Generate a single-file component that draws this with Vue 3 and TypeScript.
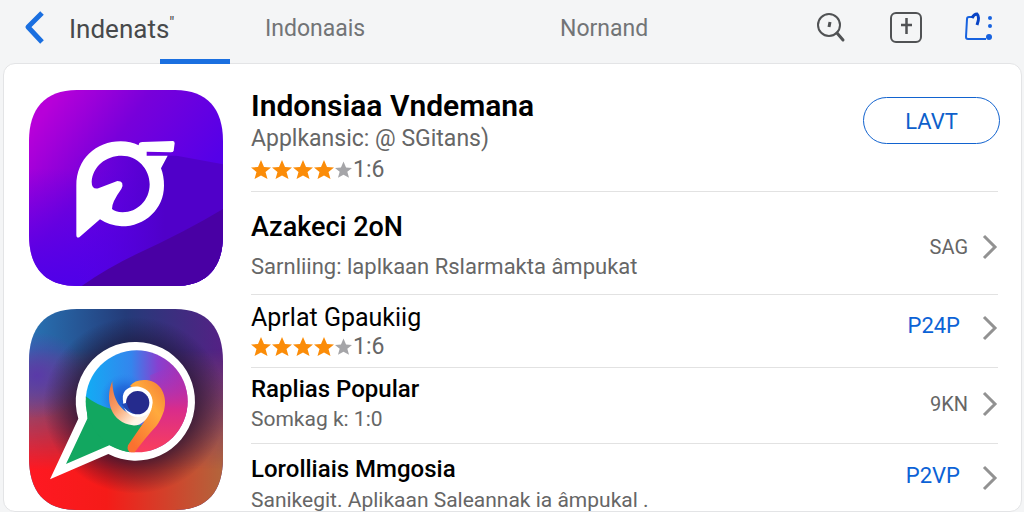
<script setup lang="ts">
interface Entry {
  title: string
  detail?: string
  rating?: string
  action: string
  muted?: boolean
  size: string
}

const tabs: string[] = ['Indonaais', 'Nornand']

const entries: Entry[] = [
  { title: 'Azakeci 2oN', detail: 'Sarnliing: laplkaan Rslarmakta âmpukat', action: 'SAG', muted: true, size: 'tall' },
  { title: 'Aprlat Gpaukiig', rating: '1:6', action: 'P24P', size: 'rated' },
  { title: 'Raplias Popular', detail: 'Somkag k: 1:0', action: '9KN', muted: true, size: 'short' },
  { title: 'Lorolliais Mmgosia', detail: 'Sanikegit. Aplikaan Saleannak ia âmpukal .', action: 'P2VP', size: 'short' },
]
</script>

<template>
  <div class="page">
    <header class="bar">
      <button class="icon-button back" aria-label="Back">
        <svg width="22" height="36" viewBox="0 0 22 36"><path d="M20 3 6 17 20 32" fill="none" stroke="#1a6fe0" stroke-width="5" stroke-linejoin="round" /></svg>
      </button>
      <nav class="tabs">
        <a class="tab current" href="#">Indenats<sup>"</sup></a>
        <a v-for="tab in tabs" :key="tab" class="tab" href="#">{{ tab }}</a>
      </nav>
      <div class="tools">
        <button class="icon-button" aria-label="Search">
          <svg width="32" height="32" viewBox="0 0 32 32" fill="none" stroke="#505254">
            <circle cx="13" cy="13" r="11" stroke-width="2" />
            <path d="m21 21 6 7" stroke-width="3" stroke-linecap="round" />
            <path d="m14 10-1 5" stroke-width="3" />
          </svg>
        </button>
        <button class="icon-button" aria-label="Add">
          <svg width="32" height="32" viewBox="0 0 32 32" fill="none" stroke="#505254">
            <rect x="1" y="1" width="30" height="29" rx="5" stroke-width="2" />
            <path d="M11 13h11M16.500 6v16" stroke-width="2.500" />
          </svg>
        </button>
        <button class="icon-button" aria-label="Share">
          <svg width="32" height="32" viewBox="0 0 32 32" fill="none" stroke="#1762df">
            <path d="M8 5H5Q3 5 3 7L2 25Q2 27 4 27H22" stroke-width="2" />
            <path d="M8 6Q10 2 13 2Q16 5 13 13" stroke-width="3" stroke="#0843c5" />
            <g fill="#1762df" stroke="none"><circle cx="26" cy="6" r="2" /><circle cx="26" cy="14" r="2" /><circle cx="25" cy="25" r="3" /></g>
          </svg>
        </button>
      </div>
      <span class="marker"></span>
    </header>

    <main class="card">
      <aside class="icons">
        <svg class="app-icon" viewBox="57 43 582 588" role="img" aria-label="Indonsiaa">
          <defs>
            <linearGradient id="violet" x1="0.05" y1="0.15" x2="0.75" y2="0.65">
              <stop offset="0" stop-color="#b700d9" /><stop offset="0.45" stop-color="#7800da" /><stop offset="1" stop-color="#5500e8" />
            </linearGradient>
            <linearGradient id="shade" x1="0" y1="0" x2="1" y2="0">
              <stop offset="0" stop-color="#5800df" stop-opacity="0" /><stop offset="0.6" stop-color="#5000c9" />
            </linearGradient>
            <linearGradient id="low" x1="0" y1="0" x2="0" y2="1">
              <stop offset="0.4" stop-color="#5000e8" stop-opacity="0" /><stop offset="1" stop-color="#5000e8" />
            </linearGradient>
            <clipPath id="tile"><path d="M200 43H496C592 43 639 100 639 196V478C639 574 592 631 496 631H200C104 631 57 574 57 478V196C57 100 104 43 200 43Z" /></clipPath>
          </defs>
          <g clip-path="url(#tile)">
            <path fill="url(#violet)" d="M57 43h582v588H57z" />
            <path fill="url(#low)" d="M57 43h582v588H57z" />
            <path fill="url(#shade)" d="M200 240H500L639 266V631H200z" />
            <path fill="#4900a4" d="M215 631Q290 578 380 535Q530 466 639 400V631Z" />
          </g>
          <path fill="#fff" fill-rule="evenodd" d="M199 330C199 250 258 197 332 197Q362 197 386 209Q386 199 398 199L488 196Q494 196 494 203L491 225Q490 230 482 230L410 228V240H473L453 278Q462 300 462 330C462 400 405 452 335 452Q298 450 270 431L208 485Q199 488 199 477ZM245 318C248 272 288 240 335 240C383 240 419 280 419 326C419 374 382 410 338 410Q315 409 306 400Q305 380 334 340Q345 316 322 316L265 338Q245 342 245 318Z" />
        </svg>

        <svg class="app-icon second" viewBox="57 41 582 603" role="img" aria-label="Aprlat">
          <defs>
            <linearGradient id="night" x1="0" y1="0" x2="1" y2="0">
              <stop offset="0" stop-color="#2873b4" /><stop offset="0.5" stop-color="#243b79" /><stop offset="1" stop-color="#542185" />
            </linearGradient>
            <linearGradient id="ember" x1="0" y1="0" x2="1" y2="0">
              <stop offset="0" stop-color="#ff1822" /><stop offset="0.4" stop-color="#f51b18" /><stop offset="1" stop-color="#b2653c" />
            </linearGradient>
            <linearGradient id="fade" x1="0" y1="0" x2="0" y2="1">
              <stop offset="0.2" stop-color="#000" /><stop offset="0.8" stop-color="#fff" />
            </linearGradient>
            <mask id="blend"><path fill="url(#fade)" d="M57 41h582v603H57z" /></mask>
            <radialGradient id="dark"><stop offset="0.5" stop-color="#1b102e" stop-opacity="0.9" /><stop offset="1" stop-color="#1b102e" stop-opacity="0" /></radialGradient>
            <radialGradient id="purple"><stop offset="0" stop-color="#5a3aa8" /><stop offset="1" stop-color="#5a3aa8" stop-opacity="0" /></radialGradient>
            <linearGradient id="sky" x1="0" y1="0.5" x2="1" y2="0.5">
              <stop offset="0" stop-color="#10aef5" /><stop offset="0.45" stop-color="#3485ed" /><stop offset="0.7" stop-color="#8740d0" /><stop offset="1" stop-color="#b42aa4" />
            </linearGradient>
            <linearGradient id="rose" x1="0" y1="0" x2="0" y2="1">
              <stop offset="0" stop-color="#9934ce" stop-opacity="0" /><stop offset="0.5" stop-color="#d82c8c" /><stop offset="1" stop-color="#ff4155" />
            </linearGradient>
            <radialGradient id="deep"><stop offset="0" stop-color="#1d4fc4" /><stop offset="0.5" stop-color="#2166d8" stop-opacity="0.8" /><stop offset="1" stop-color="#2a80ea" stop-opacity="0" /></radialGradient>
            <linearGradient id="flame" x1="1" y1="0" x2="0.3" y2="1"><stop offset="0" stop-color="#f47a35" /><stop offset="0.4" stop-color="#ffaa3d" /><stop offset="1" stop-color="#fa7130" /></linearGradient>
            <linearGradient id="crescent" x1="0" y1="0" x2="1" y2="1"><stop offset="0" stop-color="#e8703c" /><stop offset="0.4" stop-color="#f8a068" /><stop offset="0.75" stop-color="#fff4e6" /></linearGradient>
            <clipPath id="tile2"><path d="M200 41H496C592 41 639 98 639 198V487C639 587 592 644 496 644H200C104 644 57 587 57 487V198C57 98 104 41 200 41Z" /></clipPath>
            <clipPath id="disc"><circle cx="380" cy="318" r="153" /></clipPath>
          </defs>
          <g clip-path="url(#tile2)">
            <path fill="url(#night)" d="M57 41h582v603H57z" />
            <path fill="url(#ember)" mask="url(#blend)" d="M57 41h582v603H57z" />
            <ellipse cx="80" cy="240" rx="150" ry="130" fill="url(#purple)" />
            <ellipse cx="375" cy="330" rx="275" ry="265" fill="url(#dark)" />
          </g>
          <path fill="#fff" d="M380 140A178 178 0 1 1 295 476L120 552L205 370A178 178 0 0 1 380 140Z" />
          <path fill="#12a760" d="M228 302L232 370L168 506L298 450Q335 469 360 471L400 390L300 330Z" />
          <g clip-path="url(#disc)">
            <path fill="url(#sky)" d="M220 300V160H540V480H420L380 380Q270 360 220 300Z" />
            <path fill="url(#rose)" d="M420 240L540 190V490H340L430 380Z" />
            <circle cx="345" cy="310" r="75" fill="url(#deep)" />
            <path fill="#12a760" d="M220 297Q255 328 304 341Q325 385 380 390L400 390L350 475H220Z" />
          </g>
          <path fill="url(#flame)" d="M360 272Q375 251 410 254C454 258 474 305 462 346Q452 375 439 392Q408 425 374 471H360Q350 465 354 450L402 380L422 310Z" />
          <path fill="url(#crescent)" d="M307 257C308 312 330 350 380 363L425 340Q405 393 368 390C305 382 282 317 307 257Z" />
          <circle cx="383" cy="322" r="43" fill="#fff" />
          <path fill="#fff" d="M341 325C330 287 354 270 388 274Q427 283 428 322Q426 358 395 364L383 322L350 329Z" />
          <circle cx="383" cy="322" r="35" fill="#252b8d" />
          <path fill="#2148b4" d="M335 327L350 322Q355 347 375 357Q348 350 335 327Z" />
        </svg>
      </aside>

      <section class="list">
        <article class="row lead">
          <div class="copy">
            <h1>Indonsiaa Vndemana</h1>
            <p>Applkansic: @ SGitans)</p>
            <div class="rating">
              <svg v-for="n in 5" :key="n" :class="['star', { off: n === 5 }]" viewBox="0 0 20 20"><path d="m10 0 3 7 7 .5-5.500 4.500L16.500 19 10 15.500 3.500 19l2-7L0 7.500 7 7z" /></svg>
              <span>1:6</span>
            </div>
          </div>
          <button class="pill">LAVT</button>
        </article>
        <article v-for="entry in entries" :key="entry.title" :class="['row', entry.size]">
          <div class="copy">
            <h2>{{ entry.title }}</h2>
            <p v-if="entry.detail">{{ entry.detail }}</p>
            <div v-else class="rating">
              <svg v-for="n in 5" :key="n" :class="['star', { off: n === 5 }]" viewBox="0 0 20 20"><path d="m10 0 3 7 7 .5-5.500 4.500L16.500 19 10 15.500 3.500 19l2-7L0 7.500 7 7z" /></svg>
              <span>{{ entry.rating }}</span>
            </div>
          </div>
          <a :class="['go', { muted: entry.muted }]" href="#">
            <span>{{ entry.action }}</span>
            <svg width="16" height="26" viewBox="0 0 16 26"><path d="M2 2 13 13 2 24" fill="none" stroke="#929292" stroke-width="3" /></svg>
          </a>
        </article>
      </section>
    </main>
  </div>
</template>

<style>
body { margin: 0; }
</style>

<style scoped>
* { box-sizing: border-box; }
.page { display: flex; flex-direction: column; height: 100vh; overflow: hidden; padding: 0 2px 0 3px; background: #f4f5f6; font-family: Roboto, "Liberation Sans", sans-serif; color: #000; }
button { font: inherit; cursor: pointer; }
a { color: inherit; text-decoration: none; }
.bar { position: relative; flex: none; display: flex; align-items: center; height: 63px; padding: 0 26px 8px 19px; }
.icon-button { display: flex; padding: 0; border: 0; background: none; }
.tabs { flex: 1; display: grid; grid-template-columns: 196px 295px 1fr; margin-left: 25px; padding-top: 2px; font-size: 23px; line-height: 32px; color: #727476; }
.tab.current { font-size: 26px; color: #47494b; -webkit-font-smoothing: antialiased; }
.tab sup { font-size: 16px; line-height: 0; }
.tools { display: flex; gap: 42px; }
.marker { position: absolute; left: 157px; bottom: -1px; width: 70px; height: 5px; background: #1a6fe0; }
.card { flex: 1; min-height: 0; display: flex; gap: 28px; padding: 0 23px 0 25px; overflow: hidden; border: 1px solid #e3e4e6; border-radius: 12px; background: #fff; }
.icons { flex: none; width: 194px; padding-top: 26px; }
.app-icon { display: block; width: 100%; }
.second { margin-top: 23px; }
.list { flex: 1; min-width: 0; }
.row { display: flex; justify-content: space-between; align-items: center; border-bottom: 1px solid #e2e2e2; white-space: nowrap; }
h1, h2, p { margin: 0; }
h1 { font-size: 30px; line-height: 32px; font-weight: 600; }
h2 { font-size: 25px; line-height: 30px; font-weight: 400; }
p { font-size: 22px; line-height: 30px; color: #666; }
.lead { align-items: flex-start; padding: 26px 0 7px; }
.lead p { font-size: 23px; line-height: 34px; }
.tall { padding: 19px 0 11px; }
.tall h2 { font-size: 27px; line-height: 32px; font-weight: 500; }
.tall p { padding-top: 8px; line-height: 32px; }
.rated { padding: 8px 0 6px; }
.rated .go { margin-bottom: 8px; }
.short { padding: 6px 0 9px; }
.short h2 { font-size: 24px; font-weight: 500; }
.short p { font-size: 21px; }
.row:last-child { align-items: flex-start; padding: 10px 0 0; border-bottom: 0; }
.row:last-child p { padding-top: 4px; line-height: 24px; }
.row:last-child .go { margin-top: 8px; }
.rating { display: flex; align-items: center; gap: 1px; font-size: 23px; line-height: 28px; color: #666; }
.star { width: 20px; height: 20px; fill: #fb8c08; }
.star.off { width: 17px; fill: #a5a5a8; }
.pill { width: 137px; height: 47px; margin-top: 7px; margin-right: -2px; padding: 2px 0 0; border: 1px solid #1263cf; border-radius: 24px; background: #fff; color: #0d5fcb; font-size: 22px; }
.go { display: flex; align-items: center; gap: 22px; color: #0b62d6; font-size: 22px; line-height: 28px; }
.go span { padding-bottom: 4px; }
.go.muted { gap: 14px; color: #666; font-size: 20px; }
.go.muted span { padding-bottom: 0; }
</style>
